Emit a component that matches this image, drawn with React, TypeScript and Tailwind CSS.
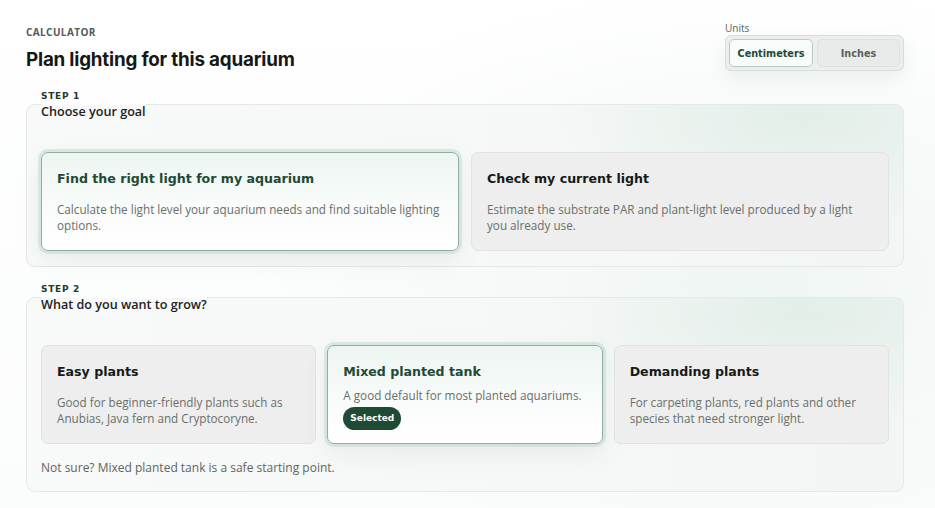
import React from "react";

const head = "font-['DejaVu_Sans',sans-serif]";
const body = "font-['Open_Sans',sans-serif]";

function Card({
  title,
  desc,
  selected,
  badge,
}: {
  title: string;
  desc: string;
  selected?: boolean;
  badge?: boolean;
}) {
  return (
    <div
      className={
        "rounded-[7px] border px-[15px] pt-[17px] pb-[14px] h-[99px] " +
        (selected
          ? "border-[#8fae9f] bg-[linear-gradient(180deg,#edf5f1_0%,#fbfdfc_70%,#ffffff_100%)] shadow-[0_0_0_3px_rgba(196,216,206,0.55),0_10px_24px_rgba(90,130,110,0.10)]"
          : "border-[#e0e3e1] bg-[#edeeed]")
      }
    >
      <div
        className={
          head +
          " text-[12.6px] font-bold leading-[18px] " +
          (selected ? "text-[#1f4a35]" : "text-[#161a18]")
        }
      >
        {title}
      </div>
      <div
        className={
          body +
          " text-[11.7px] leading-[16px] text-[#6a6e6c] " +
          (badge ? "mt-[6px]" : "mt-[13px]")
        }
      >
        {desc}
      </div>
      {badge && (
        <span
          className={
            head +
            " mt-[2px] inline-flex items-center rounded-full bg-[#1f4b35] px-[7px] h-[23px] text-[9px] font-bold text-white"
          }
        >
          Selected
        </span>
      )}
    </div>
  );
}

function Step({
  step,
  title,
  children,
}: {
  step: string;
  title: string;
  children: React.ReactNode;
}) {
  return (
    <fieldset className="rounded-[9px] border border-[#e4e8e6] bg-[radial-gradient(ellipse_260px_110px_at_88%_8%,rgba(214,232,223,0.55),rgba(255,255,255,0)_100%),linear-gradient(90deg,#f8f9f9_0%,#f6f8f7_60%,#f1f5f3_100%)] px-[14px] pb-[15px]">
      <legend className="p-0 pt-[2px]">
        <div
          className={
            head +
            " text-[9px] font-bold tracking-[0.08em] leading-[12px] text-[#1e3a2d]"
          }
        >
          {step}
        </div>
        <div
          className={
            body +
            " text-[12.6px] font-semibold leading-[18px] text-[#1d211f] mt-[1px]"
          }
        >
          {title}
        </div>
      </legend>
      {children}
    </fieldset>
  );
}

export default function App() {
  return (
    <div className="min-h-[508px] w-[935px] bg-[radial-gradient(ellipse_500px_300px_at_80%_55%,rgba(236,244,240,0.8),rgba(255,255,255,0)_100%),linear-gradient(180deg,#ffffff,#fbfcfc)] pl-[26px] pr-[31px] pt-[23px] pb-[16px]">
      <div className="flex justify-between items-start">
        <div>
          <div
            className={
              body +
              " mt-[2px] text-[10px] font-bold tracking-[0.04em] leading-[14px] text-[#555a57]"
            }
          >
            CALCULATOR
          </div>
          <h1
            className={
              "font-['Inter',sans-serif] mt-[9px] text-[18.8px] font-bold leading-[24px] text-[#151816] tracking-[-0.01em]"
            }
          >
            Plan lighting for this aquarium
          </h1>
        </div>
        <div>
          <div className={body + " text-[10px] leading-[11px] text-[#5e6360]"}>
            Units
          </div>
          <div className="mt-[1px] flex gap-[4px] rounded-[6px] border border-[#d9dcda] bg-[#eceeed] p-[3px] shadow-[0_8px_18px_rgba(120,150,135,0.12)]">
            <button
              className={
                head +
                " h-[28px] w-[84px] pt-[2px] rounded-[5px] border border-[#b8cbc1] bg-[#f7fbf9] text-[9.7px] font-bold text-[#1f4a35]"
              }
            >
              Centimeters
            </button>
            <button
              className={
                head +
                " h-[28px] w-[83px] pt-[2px] rounded-[5px] border border-[#dfe2e0] bg-[#e9ebea] text-[9.7px] font-bold text-[#5a5f5c]"
              }
            >
              Inches
            </button>
          </div>
        </div>
      </div>

      <div className="mt-[16px]">
        <Step step="STEP 1" title="Choose your goal">
          <div className="mt-[31px] grid grid-cols-2 gap-[12px]">
            <Card
              selected
              title="Find the right light for my aquarium"
              desc="Calculate the light level your aquarium needs and find suitable lighting options."
            />
            <Card
              title="Check my current light"
              desc="Estimate the substrate PAR and plant-light level produced by a light you already use."
            />
          </div>
        </Step>
      </div>

      <div className="mt-[14px]">
        <Step step="STEP 2" title="What do you want to grow?">
          <div className="mt-[31px] grid grid-cols-3 gap-[11px]">
            <Card
              title="Easy plants"
              desc="Good for beginner-friendly plants such as Anubias, Java fern and Cryptocoryne."
            />
            <Card
              selected
              badge
              title="Mixed planted tank"
              desc="A good default for most planted aquariums."
            />
            <Card
              title="Demanding plants"
              desc="For carpeting plants, red plants and other species that need stronger light."
            />
          </div>
          <p
            className={
              body + " mt-[16px] text-[12px] leading-[16px] text-[#5f6461]"
            }
          >
            Not sure? Mixed planted tank is a safe starting point.
          </p>
        </Step>
      </div>
    </div>
  );
}
